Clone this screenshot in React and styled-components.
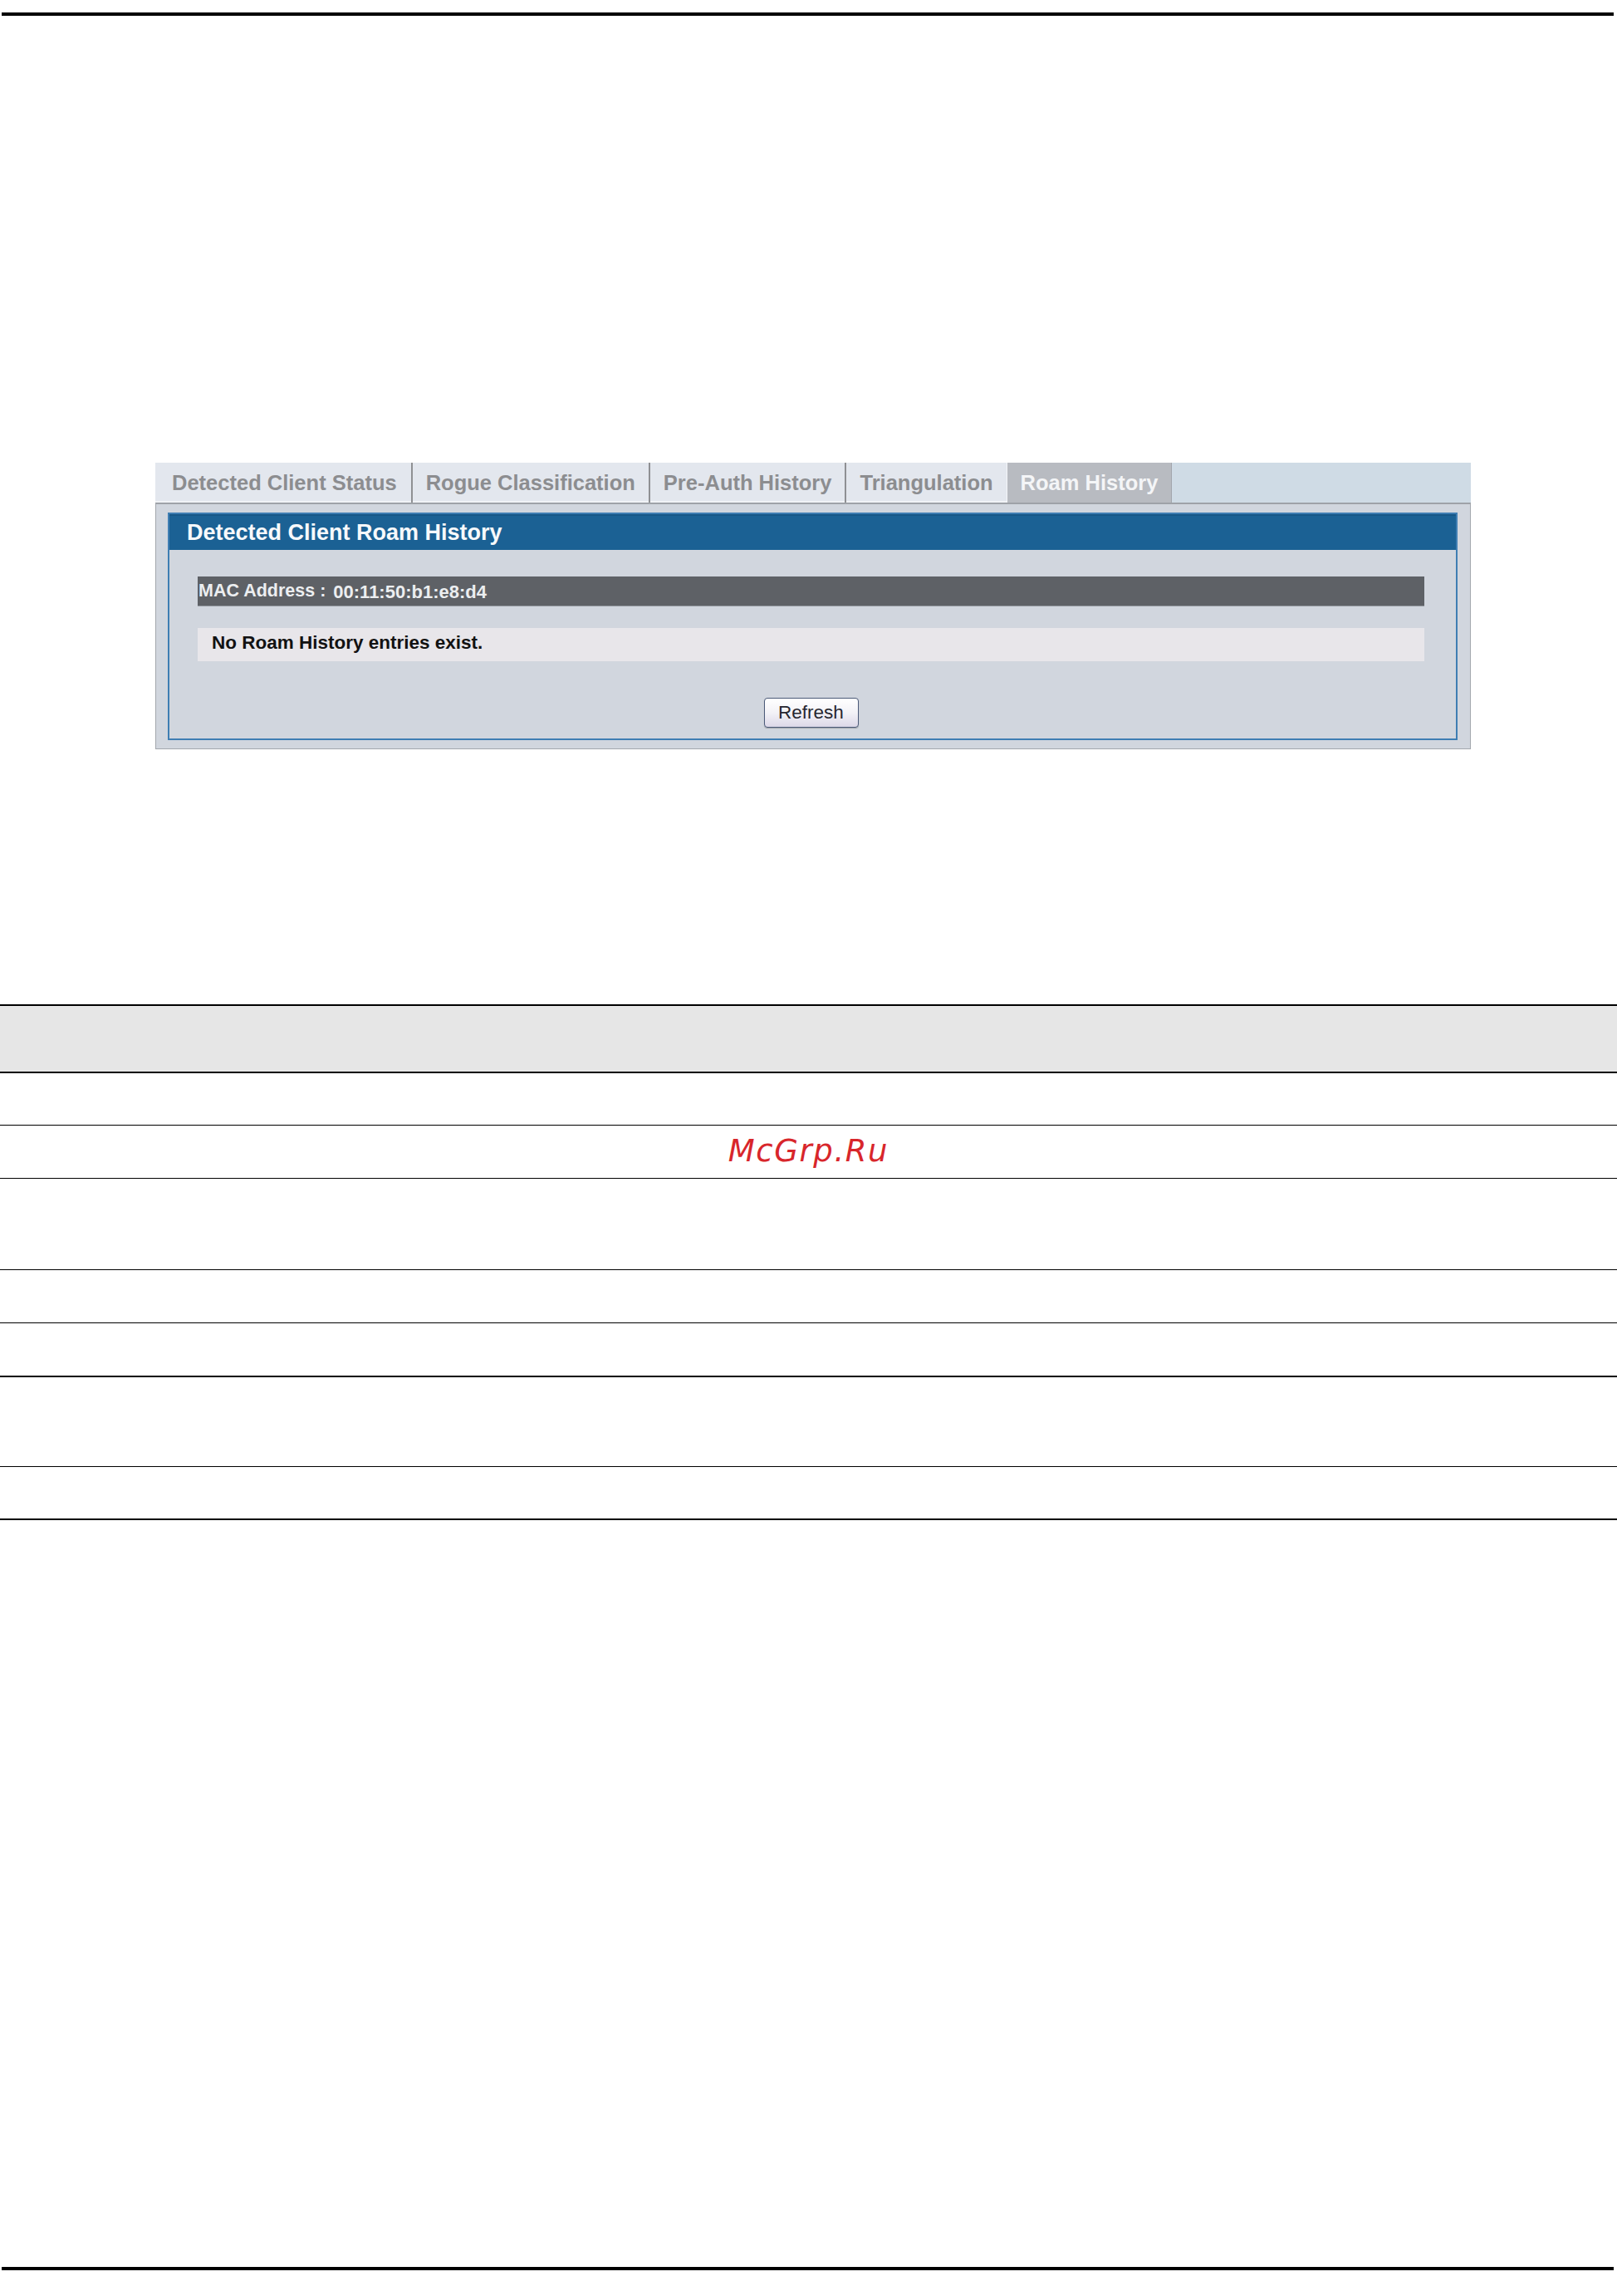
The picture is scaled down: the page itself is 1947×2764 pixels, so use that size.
import React from "react";
import styled, { createGlobalStyle } from "styled-components";

const Global = createGlobalStyle`
  html, body { margin: 0; padding: 0; background: #ffffff; }
  body { font-family: "Liberation Sans", Arial, sans-serif; }
`;

const Page = styled.div`
  width: 1947px;
  min-height: 2764px;
  background: #ffffff;
  display: flex;
  flex-direction: column;
`;

const Rule = styled.div`
  width: 1941px;
  margin-left: 2px;
  height: 4px;
  background: #000000;
  margin-top: ${(p) => p.$top}px;
`;

const Figure = styled.div`
  margin-top: 538px;
  margin-left: 187px;
  width: 1584px;
  display: flex;
  flex-direction: column;
`;

const TabBar = styled.div`
  display: flex;
  height: 48px;
  background: #cfdbe5;
`;

const Tab = styled.div`
  display: flex;
  align-items: center;
  padding: ${(p) => (p.$first ? "0 17px 0 20px" : "0 16px")};
  height: 48px;
  box-sizing: border-box;
  font-family: "Liberation Sans", Arial, sans-serif;
  font-weight: bold;
  font-size: 25.5px;
  white-space: nowrap;
  color: ${(p) => (p.$active ? "#f4f5f7" : "#8c8d90")};
  background: ${(p) => (p.$active ? "#b8bbc1" : "#e3e7ee")};
  border-right: ${(p) =>
    p.$active ? "1px solid #a2a5ab" : p.$beforeActive ? "1px solid #f4f6f9" : "2px solid #8f9093"};
  box-shadow: ${(p) => (p.$active ? "none" : "inset 0 -2px 0 #f0f2f6")};
`;

const Panel = styled.div`
  background: #d1d6de;
  border: 1px solid #a3a7ad;
  border-top: 2px solid #9ea2a8;
  padding: 10px 15px 10px 14px;
`;

const Inner = styled.div`
  border: 2px solid #3f7eb3;
  display: flex;
  flex-direction: column;
`;

const Header = styled.div`
  height: 43px;
  background: #1b6194;
  border-top: 2px solid #165787;
  box-sizing: border-box;
  display: flex;
  align-items: center;
  padding-left: 21px;
  color: #f7f9fb;
  font-weight: bold;
  font-size: 27px;
  font-family: "Liberation Sans", Arial, sans-serif;
`;

const Body = styled.div`
  padding: 32px 38px 13px 34px;
  display: flex;
  flex-direction: column;
`;

const MacBar = styled.div`
  height: 35px;
  background: #5e6166;
  display: flex;
  align-items: center;
  padding-left: 1px;
  gap: 9px;
  color: #eceef0;
  font-weight: bold;
  box-shadow: 0 1px 0 #8f949b;
`;

const MacLabel = styled.span`
  font-size: 21.5px;
`;

const MacValue = styled.span`
  font-size: 22px;
  padding-top: 3px;
`;

const EmptyRow = styled.div`
  margin-top: 27px;
  height: 40px;
  box-sizing: border-box;
  background: #e8e6ea;
  display: flex;
  align-items: center;
  padding: 0 0 5px 17px;
  color: #121212;
  font-weight: bold;
  font-size: 22.5px;
`;

const ButtonRow = styled.div`
  margin-top: 44px;
  display: flex;
  justify-content: center;
`;

const Button = styled.button`
  width: 114px;
  height: 36px;
  border: 1.5px solid #4b5a78;
  border-radius: 4px;
  background: linear-gradient(#ffffff 0%, #f3f2f7 50%, #dcd8e8 100%);
  font-family: "Liberation Sans", Arial, sans-serif;
  font-size: 22.5px;
  color: #262630;
  padding: 0;
  box-shadow: 0 1px 1px rgba(0, 0, 0, 0.25);
`;

const Table = styled.div`
  margin-top: 307px;
  border-top: 2px solid #000;
  display: flex;
  flex-direction: column;
`;

const Row = styled.div`
  height: ${(p) => p.$h}px;
  background: ${(p) => (p.$head ? "#e6e6e6" : "#ffffff")};
  border-bottom: ${(p) => (p.$thick ? 2 : 1.5)}px solid #000;
  display: flex;
  align-items: center;
  justify-content: center;
`;

const Watermark = styled.span`
  font-family: "DejaVu Sans", Verdana, sans-serif;
  font-style: italic;
  font-size: 37px;
  letter-spacing: 1.6px;
  color: #d8262b;
  padding-bottom: 2px;
`;

const tabs = [
  "Detected Client Status",
  "Rogue Classification",
  "Pre-Auth History",
  "Triangulation",
  "Roam History",
];

const rows = [
  { h: 79, head: true, thick: true },
  { h: 62 },
  { h: 63, mark: true },
  { h: 109 },
  { h: 63 },
  { h: 63, thick: true },
  { h: 107 },
  { h: 62, thick: true },
];

export default function App() {
  const activeIndex = 4;
  return (
    <>
      <Global />
      <Page>
        <Rule $top={15} />
        <Figure>
          <TabBar>
            {tabs.map((t, i) => (
              <Tab
                key={t}
                $first={i === 0}
                $active={i === activeIndex}
                $beforeActive={i === activeIndex - 1}
              >
                {t}
              </Tab>
            ))}
          </TabBar>
          <Panel>
            <Inner>
              <Header>Detected Client Roam History</Header>
              <Body>
                <MacBar>
                  <MacLabel>MAC Address :</MacLabel>
                  <MacValue>00:11:50:b1:e8:d4</MacValue>
                </MacBar>
                <EmptyRow>No Roam History entries exist.</EmptyRow>
                <ButtonRow>
                  <Button type="button">Refresh</Button>
                </ButtonRow>
              </Body>
            </Inner>
          </Panel>
        </Figure>
        <Table>
          {rows.map((r, i) => (
            <Row key={i} $h={r.h} $head={r.head} $thick={r.thick}>
              {r.mark ? <Watermark>McGrp.Ru</Watermark> : null}
            </Row>
          ))}
        </Table>
        <Rule $top={899} />
      </Page>
    </>
  );
}
